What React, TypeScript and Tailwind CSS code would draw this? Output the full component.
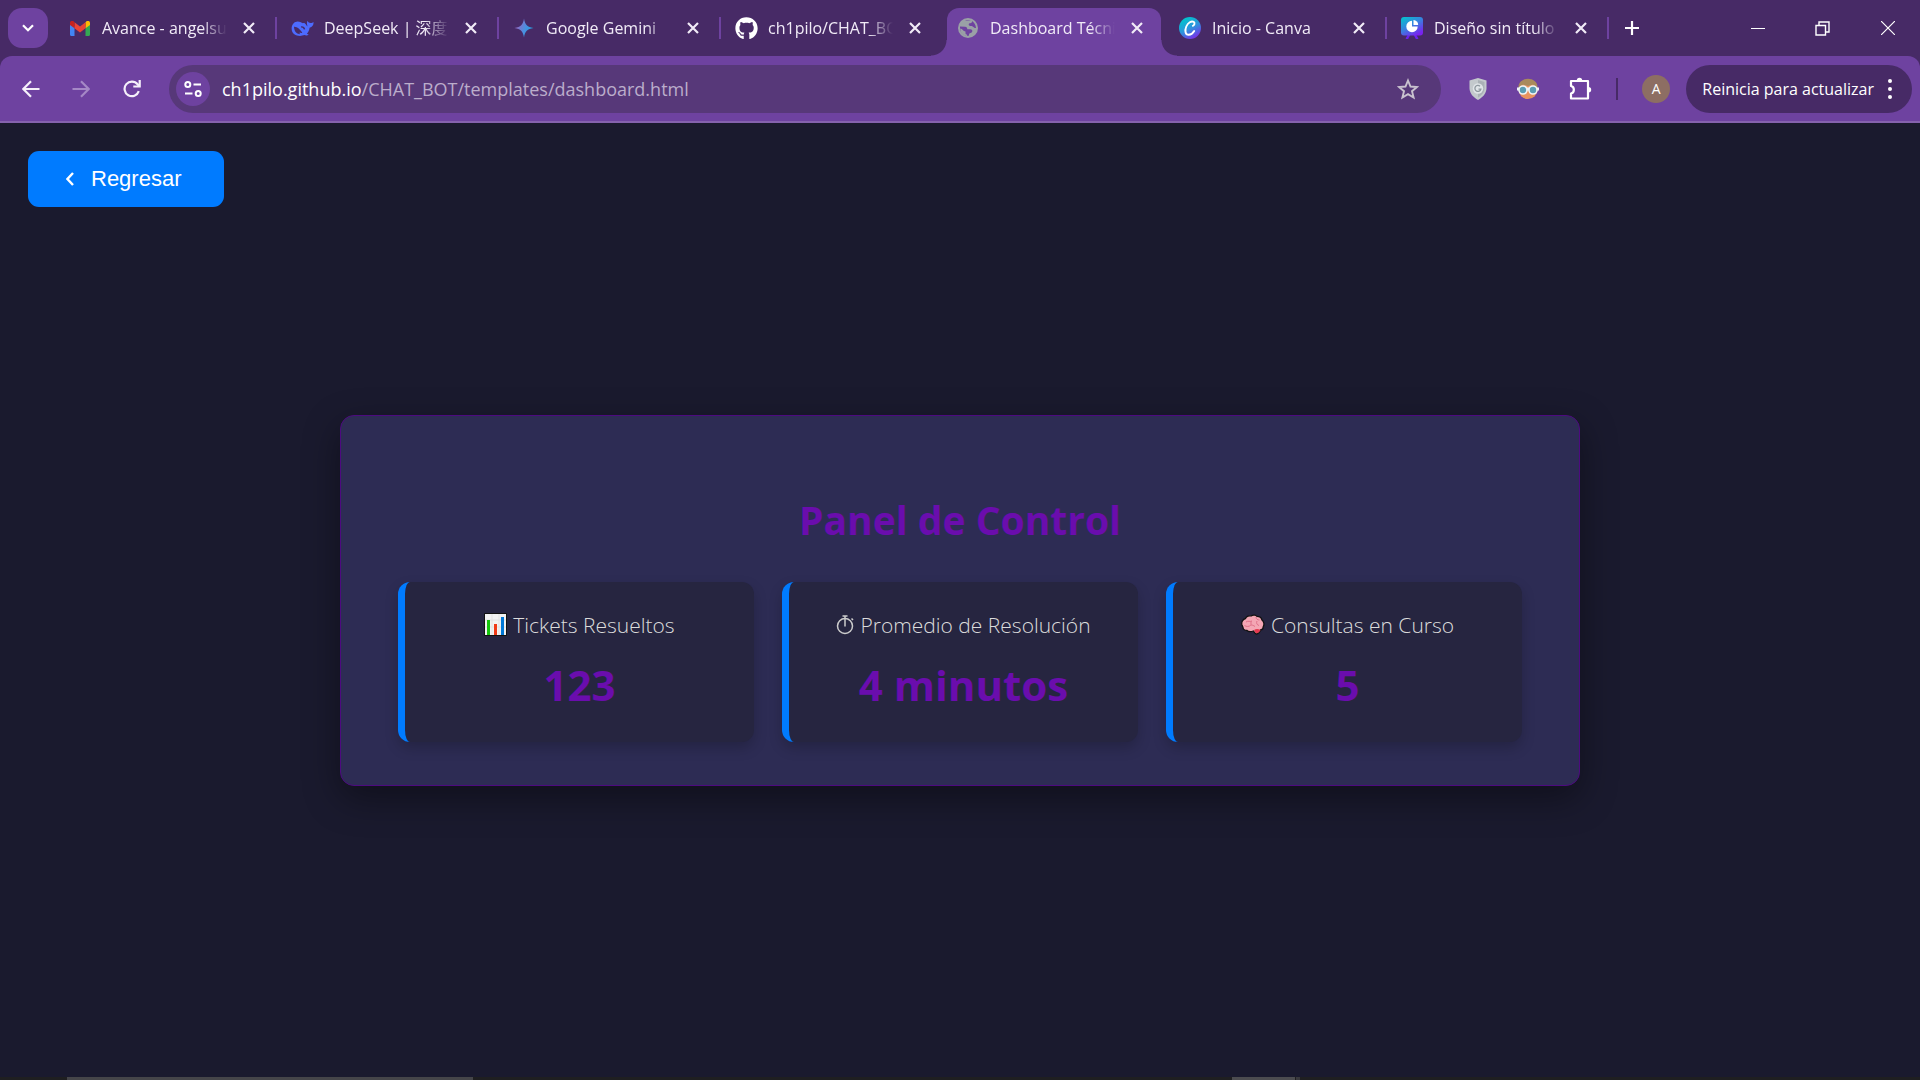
import type { ReactNode } from "react";
import { FaGithub } from "react-icons/fa";

function GmailIcon() {
  return (
    <svg viewBox="0 0 20 15" className="h-[15px] w-5" aria-hidden="true">
      <path d="M0 3v10.500c0 .8.600 1.500 1.400 1.500H4.500V5.500z" fill="#4285f4" />
      <path d="M20 3v10.500c0 .8-.600 1.500-1.400 1.500H15.500V5.500z" fill="#34a853" />
      <path d="M15.500 1.500v5.800L20 4V2c0-1.900-2.100-2.800-3.600-1.700z" fill="#fbbc04" />
      <path d="M4.500 7.300V1.300L10 5.500l5.500-4.200v6L10 11.500z" fill="#ea4335" />
      <path d="M0 2v2l4.500 3.300V1.300L3.600.3C2.100-.8 0 .1 0 2z" fill="#c5221f" />
    </svg>
  );
}

function WhaleIcon() {
  return (
    <svg viewBox="0 0 24 18" className="h-[17px] w-[23px]" aria-hidden="true">
      <path
        d="M.5 9C.5 4.500 3.500 1.500 7 1.500c2 0 3.500.8 4.800 1.800 1 .3 1.500-.4 2.200-.1 1.500.7 1.700 2.600 3.300 3.600C16.600 4.500 16.500 2.300 17.300.8c.7 1.800 2 2.300 3.200 2.300 1.400 0 2.100-.4 3.200-1 .2 3.300-1.400 5.500-4.200 6.200-.3 2.600-1.300 4.700-2.900 6.200.7.400 1.500.6 2 1.200-1.500 1-3.300.8-4.600.3C9.300 18 .5 17 .5 9z"
        fill="#4d6bfe"
      />
      <path d="M3 7.200c3.500-.2 6.500 3 8.800 6.300-1 .5-2 .2-2.800-.5.2 1 .2 1.500-.2 2C5.500 14.500 3.200 12 3 7.200z" fill="#472a66" />
      <path d="M10.500 7.500c1.600-.6 3.300.4 3.600 2.500" stroke="#472a66" strokeWidth="1.500" fill="none" />
    </svg>
  );
}

function GeminiIcon() {
  return (
    <svg viewBox="0 0 20 20" className="size-5" aria-hidden="true">
      <defs>
        <linearGradient id="gem" x1="0" x2="1" y1="0.300" y2="0.700">
          <stop offset="0.150" stopColor="#8f6bc4" />
          <stop offset="0.550" stopColor="#4b8fe0" />
          <stop offset="1" stopColor="#1aa5e0" />
        </linearGradient>
      </defs>
      <path d="M10 .5c1 6.200 3.300 8.500 9.500 9.500-6.200 1-8.500 3.300-9.500 9.500C9 13.300 6.700 11 .5 10 6.700 9 9 6.700 10 .5z" fill="url(#gem)" />
    </svg>
  );
}

function GlobeIcon() {
  return (
    <svg viewBox="0 0 20 20" className="size-5" aria-hidden="true">
      <circle cx="10" cy="10" r="10" fill="#9aa0a6" />
      <path d="M2 8.500l5 .3c1.600.1 2.300 1 2.300 2.500h3c1.300 0 2 .7 2 1.800 0 1-.6 1.800-1.800 2-1.200.2-1.500 1-1.600 2.700C5.500 18 2.200 14.700 2 10z" fill="#6e42a0" />
      <path d="M2.300 10.500c1 .2 2 .8 2.600 1.600.8 1 1.500 1.300 2.600 1.300v1.800c0 .8.600 1.400 1.500 1.400v1.300c-4-.3-6.900-3-6.700-7.400z" fill="#9aa0a6" />
      <path d="M7 2.500C9.500 1.600 12 2 14 3c.3 1.400-.5 2.200-1.800 2.200-1.200 0-1.500.6-1.500 1.300.1 1.200 1.300 1.500 2.500 1.500 2 0 2 2 4.800 2-.3-3.500-2-6-5-7.500z" fill="#6e42a0" />
    </svg>
  );
}

function CanvaIcon() {
  return (
    <svg viewBox="0 0 22 22" className="size-[22px]" aria-hidden="true">
      <defs>
        <linearGradient id="canva" x1="0.200" x2="0.700" y1="0.100" y2="1">
          <stop offset="0" stopColor="#00c4cc" />
          <stop offset="0.500" stopColor="#2f92de" />
          <stop offset="1" stopColor="#7d2ae8" />
        </linearGradient>
      </defs>
      <circle cx="11" cy="11" r="11" fill="url(#canva)" />
      <path d="M13.800 8.800c1.700-.5 2.400-3 .8-4C12.500 3.700 9 5.500 7.300 9.500c-1.800 4.200-.9 8.100 2.200 8.300 2.400.1 4.400-1.600 5.700-3.800" fill="none" stroke="#fff" strokeWidth="1.900" strokeLinecap="round" />
    </svg>
  );
}

function DesignIcon() {
  return (
    <svg viewBox="0 0 22 22" className="size-[22px]" aria-hidden="true">
      <defs>
        <linearGradient id="board" x1="0" x2="0.700" y1="0" y2="1">
          <stop offset="0" stopColor="#00c9cc" />
          <stop offset="0.550" stopColor="#3b7de0" />
          <stop offset="1" stopColor="#7a22ee" />
        </linearGradient>
      </defs>
      <path d="M8.500 17L6 21.500M13.500 17l2.500 4.500" stroke="#6a22ee" strokeWidth="2.500" strokeLinecap="round" />
      <rect width="22" height="18.500" rx="3" fill="url(#board)" />
      <path d="M11 9.500V3.800a5.700 5.700 0 1 0 5.700 5.700z" fill="#fff" />
      <path d="M12.500 8V3a5 5 0 0 1 4.700 5z" fill="#fff" />
    </svg>
  );
}

function CloseIcon() {
  return (
    <svg viewBox="0 0 12 12" className="size-3" aria-hidden="true">
      <path d="M1 1l10 10M11 1L1 11" stroke="#f1ebf7" strokeWidth="2.200" />
    </svg>
  );
}

type TabProps = { title: string; icon: ReactNode; active?: boolean; divider?: boolean };

function Tab({ title, icon, active, divider }: TabProps) {
  return (
    <div className="relative flex h-full w-[222px] min-w-0 items-center">
      {active && (
        <div className="absolute inset-x-1 top-2 bottom-0 rounded-t-xl bg-[#6e42a0]">
          <span className="absolute bottom-0 -left-4 size-4 bg-[radial-gradient(circle_at_0_0,transparent_15px,#6e42a0_16px)]" />
          <span className="absolute -right-4 bottom-0 size-4 bg-[radial-gradient(circle_at_100%_0,transparent_15px,#6e42a0_16px)]" />
        </div>
      )}
      <div className="relative flex min-w-0 flex-1 items-center pr-5 pl-[13px]">
        <span className="flex w-6 shrink-0 justify-center">{icon}</span>
        <span className="ml-[10px] min-w-0 flex-1 overflow-hidden text-[16px] leading-6 whitespace-nowrap text-[#f1ebf7] [mask-image:linear-gradient(to_right,#000_80%,transparent)]">
          {title}
        </span>
        <button type="button" aria-label={`Cerrar ${title}`} className="ml-4 shrink-0">
          <CloseIcon />
        </button>
      </div>
      <span className={divider ? "relative h-[22px] w-[2px] shrink-0 bg-[#6e42a0]" : "w-[2px] shrink-0"} />
    </div>
  );
}

function TabStrip() {
  return (
    <header className="flex h-14 items-center bg-[#472a66]">
      <button type="button" aria-label="Buscar pestañas" className="mr-[7px] ml-2 flex size-10 shrink-0 items-center justify-center rounded-[14px] bg-[#6e42a0]">
        <svg viewBox="0 0 12 8" className="h-2 w-3" aria-hidden="true">
          <path d="M1 1.200l5 5 5-5" fill="none" stroke="#fff" strokeWidth="2.200" />
        </svg>
      </button>
      <nav aria-label="Pestañas" className="flex h-full min-w-0">
        <Tab title="Avance - angelsu" icon={<GmailIcon />} divider />
        <Tab title="DeepSeek | 深度求" icon={<WhaleIcon />} divider />
        <Tab title="Google Gemini" icon={<GeminiIcon />} divider />
        <Tab title="ch1pilo/CHAT_BO" icon={<FaGithub className="size-[23px] text-white" />} />
        <Tab title="Dashboard Técnic" icon={<GlobeIcon />} active />
        <Tab title="Inicio - Canva" icon={<CanvaIcon />} divider />
        <Tab title="Diseño sin título" icon={<DesignIcon />} divider />
      </nav>
      <button type="button" aria-label="Nueva pestaña" className="ml-4">
        <svg viewBox="0 0 14 14" className="size-[14px]" aria-hidden="true">
          <path d="M7 0v14M0 7h14" stroke="#fff" strokeWidth="2.200" />
        </svg>
      </button>
      <div className="ml-auto flex h-full">
        <button type="button" aria-label="Minimizar" className="flex w-[65px] items-center justify-center">
          <svg viewBox="0 0 14 14" className="size-[14px]" aria-hidden="true">
            <path d="M0 7.500h14" stroke="#fff" />
          </svg>
        </button>
        <button type="button" aria-label="Restaurar" className="flex w-[65px] items-center justify-center">
          <svg viewBox="0 0 15 15" className="size-[15px]" aria-hidden="true">
            <path d="M1 4.500h9.500V14H1zM4 4V1h10v10h-3" fill="none" stroke="#fff" strokeWidth="1.400" />
          </svg>
        </button>
        <button type="button" aria-label="Cerrar ventana" className="flex w-[65px] items-center justify-center">
          <svg viewBox="0 0 14 14" className="size-[14px]" aria-hidden="true">
            <path d="M0 0l14 14M14 0L0 14" stroke="#fff" strokeWidth="1.200" />
          </svg>
        </button>
      </div>
    </header>
  );
}

function Toolbar() {
  return (
    <div className="bg-[#472a66]">
      <div className="flex h-[67px] items-center rounded-t-xl border-b-2 border-[#8562ad] bg-[#6e42a0] pr-2 pl-[22px]">
        <button type="button" aria-label="Atrás">
          <svg viewBox="0 0 18 18" className="size-[18px]" aria-hidden="true">
            <path d="M17.500 9H1.500M9 1.200L1.300 9 9 16.800" fill="none" stroke="#f5f0fa" strokeWidth="2.200" />
          </svg>
        </button>
        <button type="button" aria-label="Adelante" disabled className="ml-8">
          <svg viewBox="0 0 18 18" className="size-[18px]" aria-hidden="true">
            <path d="M.5 9h16M9 1.200L16.700 9 9 16.800" fill="none" stroke="#a588c6" strokeWidth="2.200" />
          </svg>
        </button>
        <button type="button" aria-label="Recargar" className="ml-[33px]">
          <svg viewBox="0 0 18 18" className="size-[18px]" aria-hidden="true">
            <path d="M15.800 11.200A7.300 7.300 0 1 1 14.600 4.300L16 6" fill="none" stroke="#f5f0fa" strokeWidth="2.200" />
            <path d="M17.800 0v7.500h-7.500V5.400h5.300V0z" fill="#f5f0fa" />
          </svg>
        </button>
        <form className="ml-7 flex h-12 flex-1 items-center rounded-full bg-[#573879] pr-[22px] pl-[7px]">
          <button type="button" aria-label="Información del sitio" className="flex size-[34px] items-center justify-center rounded-full bg-[#6e42a0]">
            <svg viewBox="0 0 18 16" className="h-4 w-[18px]" fill="none" stroke="#fff" strokeWidth="2" aria-hidden="true">
              <circle cx="3.800" cy="3.500" r="2.500" />
              <path d="M9.500 3.500H17M1 12.500h7.500" />
              <circle cx="14.200" cy="12.500" r="2.500" />
            </svg>
          </button>
          <a href="#dashboard" className="ml-3 flex-1 text-[18px] leading-6 text-[#bbadcb]">
            <span className="text-white">ch1pilo.github.io</span>/CHAT_BOT/templates/dashboard.html
          </a>
          <button type="button" aria-label="Agregar a favoritos">
            <svg viewBox="0 0 22 22" className="size-[22px]" aria-hidden="true">
              <path d="M11 2.500l2.500 6 6.500.5-5 4.200 1.600 6.400L11 16.200l-5.600 3.400L7 13.200 2 9l6.500-.5z" fill="none" stroke="#c9c2cf" strokeWidth="1.900" />
            </svg>
          </button>
        </form>
        <button type="button" aria-label="Extensión de seguridad" className="ml-7">
          <svg viewBox="0 0 18 22" className="h-[22px] w-[18px]" aria-hidden="true">
            <path d="M9 0l8.500 2.500V10c0 5.500-4 9.500-8.500 12C4.500 19.500.5 15.500.5 10V2.500z" fill="#c3c9cc" />
            <path d="M9 2l6.500 2v6.500c0 4-3 7-6.500 9z" fill="#aab1b6" />
            <circle cx="9" cy="10.500" r="5.200" fill="#dfe4e7" />
            <path d="M11 8.200a3 3 0 1 0 .8 3H9.500" fill="none" stroke="#8f999f" strokeWidth="1.300" />
          </svg>
        </button>
        <button type="button" aria-label="Extensión de perfil" className="ml-[30px]">
          <svg viewBox="0 0 22 22" className="size-[22px]" aria-hidden="true">
            <circle cx="11" cy="11.500" r="9.500" fill="#e8935f" />
            <path d="M1.500 10C1 4 6 .8 11 .8S21 4 20.500 10L16 6.500 11 8 6 6.500z" fill="#a98a5c" />
            <rect x="0" y="9.500" width="22" height="3" fill="#eef4f6" />
            <circle cx="6" cy="12" r="4" fill="#5b9db3" stroke="#eef4f6" strokeWidth="1.600" />
            <circle cx="16" cy="12" r="4" fill="#5b9db3" stroke="#eef4f6" strokeWidth="1.600" />
          </svg>
        </button>
        <button type="button" aria-label="Extensiones" className="ml-[29px]">
          <svg viewBox="0 0 24 24" className="size-6" aria-hidden="true">
            <path d="M3 4h17v17.500H3v-5c3.800-.8 3.800-6.700 0-7.500z" fill="none" stroke="#fff" strokeWidth="2.200" strokeLinejoin="round" />
            <path d="M8.800 3.500a2.700 2.700 0 0 1 5.400 0zM20.500 10a2.700 2.700 0 0 1 0 5.400z" fill="#fff" />
          </svg>
        </button>
        <span className="ml-6 h-[22px] w-[2px] bg-[#472a66]" />
        <button type="button" aria-label="Perfil" className="ml-6 flex size-7 items-center justify-center rounded-full bg-[#8d6e63] text-[14px] leading-none text-white">
          A
        </button>
        <button type="button" className="ml-4 flex h-12 items-center rounded-full bg-[#472a66] pr-5 pl-4 text-[16px] leading-6 whitespace-nowrap text-white">
          Reinicia para actualizar
          <svg viewBox="0 0 4 20" className="ml-[14px] h-5 w-1" fill="#fff" aria-hidden="true">
            <circle cx="2" cy="2" r="2" />
            <circle cx="2" cy="10" r="2" />
            <circle cx="2" cy="18" r="2" />
          </svg>
        </button>
      </div>
    </div>
  );
}

function ChartIcon() {
  return (
    <svg viewBox="0 0 23 23" className="size-[23px]" aria-hidden="true">
      <rect width="23" height="23" rx="1" fill="#111" />
      <rect x="1" y="1" width="21" height="21" fill="#f2f2f2" />
      <path d="M1 7h21M1 14h21M8 1v21M15 1v21" stroke="#e2e2e2" />
      <rect x="3" y="7" width="3" height="15" fill="#16c60c" />
      <rect x="10" y="11" width="3" height="11" fill="#f03a17" />
      <rect x="17" y="4" width="3" height="18" fill="#0078d7" />
    </svg>
  );
}

function StopwatchIcon() {
  return (
    <svg viewBox="0 0 18 20" className="h-5 w-[18px]" fill="none" stroke="#ccc" strokeWidth="1.500" aria-hidden="true">
      <circle cx="9" cy="11" r="7.500" />
      <path d="M6.500 1h5M9 1v10.500M15.500 3.500l1.500 1.500" />
    </svg>
  );
}

function BrainIcon() {
  return (
    <svg viewBox="0 0 24 21" className="h-[21px] w-6" aria-hidden="true">
      <path d="M1 11C0 8 2 5 4.500 4.500 5.500 2 8.500 1.500 10 2c2-1.500 5-1 6 .3 2.500 0 4.500 1.700 5 3.700 2 1.500 2.500 4.500 1.300 6.500 0 2-1.300 3.300-2.800 3.500-.5 2-2.500 4-4 4s-2-1.500-3-3c-3 1-5.500.5-6.500-.5-2.500 0-4-1.500-4-3z" fill="#f4a6b4" stroke="#111" strokeWidth="1.300" />
      <path d="M13 16c2-1.500 4-1.500 6.500 0-.6 1.800-2.500 3.300-3.800 3.300-1.200 0-1.700-1.800-2.700-3.300z" fill="#e63950" />
      <path d="M5 8c2-1.500 4 0 6-1M10 7v4M15 3c0 2 1.500 3 3.500 3M16 7c-1 2 0 4 2 4.500M3.500 11.500c2 1.500 4.500 1 6 0s3 0 4.500 1" fill="none" stroke="#df7189" />
    </svg>
  );
}

type StatProps = { icon: ReactNode; label: string; value: string };

function StatCard({ icon, label, value }: StatProps) {
  return (
    <article className="flex flex-col items-center rounded-xl border-l-[7px] border-[#007bff] bg-[#262540] pt-7 pb-7 shadow-[0_6px_14px_rgba(0,0,0,0.2)]">
      <h2 className="flex items-center gap-[6px] text-[21px] leading-[30px] font-light whitespace-nowrap text-[#dcdcdc]">
        {icon}
        {label}
      </h2>
      <p className="mt-4 text-[42px] leading-[58px] font-bold whitespace-nowrap text-[#6a0dad]">{value}</p>
    </article>
  );
}

export default function App() {
  return (
    <div className="flex min-h-screen flex-col bg-[#1a1a2e] font-['Open_Sans','Noto_Sans_CJK_SC',sans-serif]">
      <TabStrip />
      <Toolbar />
      <main className="grid flex-1">
        <button type="button" className="col-start-1 row-start-1 m-7 flex h-14 items-center gap-[17px] self-start justify-self-start rounded-[11px] bg-[#007bff] pr-[43px] pl-[38px] font-['Liberation_Sans',Arial,sans-serif] text-[22px] leading-8 text-white">
          <svg viewBox="0 0 8 14" className="h-[14px] w-2" aria-hidden="true">
            <path d="M7 1L1.500 7 7 13" fill="none" stroke="#fff" strokeWidth="2.400" />
          </svg>
          Regresar
        </button>
        <section className="col-start-1 row-start-1 w-full max-w-[1240px] place-self-center rounded-[14px] border border-[#4d0a80] bg-[#2d2c54] px-[57px] pt-[78px] pb-[43px] shadow-[0_12px_36px_rgba(0,0,0,0.4)]">
          <h1 className="mb-9 text-center text-[39px] leading-[52px] font-bold text-[#6a0dad]">Panel de Control</h1>
          <div className="grid grid-cols-3 gap-7">
            <StatCard icon={<ChartIcon />} label="Tickets Resueltos" value="123" />
            <StatCard icon={<StopwatchIcon />} label="Promedio de Resolución" value="4 minutos" />
            <StatCard icon={<BrainIcon />} label="Consultas en Curso" value="5" />
          </div>
        </section>
      </main>
      <footer className="flex h-[3px] bg-[#1f1f21] pl-[67px]">
        <span className="w-[406px] bg-[#454549]" />
        <span className="ml-[759px] w-[63px] bg-[#4c4c50]" />
        <span className="ml-px w-1 bg-[#39393d]" />
      </footer>
    </div>
  );
}
